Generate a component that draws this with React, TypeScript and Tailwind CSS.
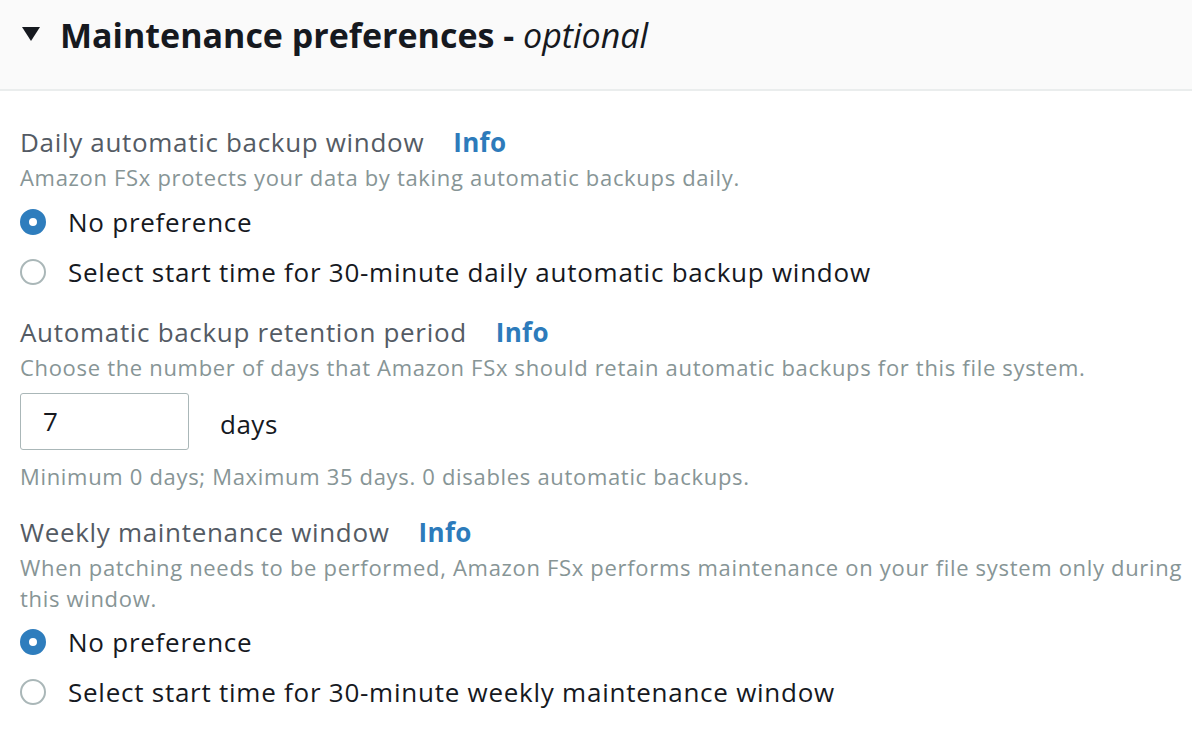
const font = { fontFamily: '"Open Sans", "Noto Sans", sans-serif' };

function Radio({ checked, label }: { checked?: boolean; label: string }) {
  return (
    <label className="flex h-[50px] items-center">
      {checked ? (
        <span className="h-[26px] w-[26px] rounded-full border-[9px] border-[#2e7dbd] bg-white" />
      ) : (
        <span className="h-[26px] w-[26px] rounded-full border-2 border-[#aab7b8] bg-white" />
      )}
      <span className="ml-[22px] whitespace-nowrap text-[26px] leading-[36px] tracking-[0.75px] text-[#16191f]">{label}</span>
    </label>
  );
}

function FieldLabel({ text, className = "" }: { text: string; className?: string }) {
  return (
    <div className={"flex h-[36px] items-center " + className}>
      <span className="text-[26px] leading-[36px] tracking-[0.68px] text-[#545b64]">{text}</span>
      <a className="ml-[29px] text-[26px] font-bold leading-[36px] tracking-[0.3px] text-[#2d7bbb]">Info</a>
    </div>
  );
}

function Description({ children, className = "" }: { children: React.ReactNode; className?: string }) {
  return (
    <p className={"text-[22px] leading-[31px] tracking-[0.68px] text-[#879596] " + className}>{children}</p>
  );
}

export default function App() {
  return (
    <div style={font} className="h-[742px] w-[1192px] overflow-hidden bg-white">
      <div className="flex h-[91px] items-start border-b-2 border-[#eaeded] bg-[#fafafa] pl-[22px] pt-[13px]">
        <svg width="18" height="15" viewBox="0 0 18 15" className="mt-[14px]">
          <polygon points="0,0 18,0 9,14" fill="#16191f" />
        </svg>
        <h2 className="ml-[20px] whitespace-nowrap text-[34px] font-bold leading-[44px] text-[#16191f]">
          Maintenance preferences - <i className="font-normal">optional</i>
        </h2>
      </div>

      <div className="flex w-[1240px] flex-col px-[20px] pt-[33px]">
        <FieldLabel text="Daily automatic backup window" />
        <Description className="mt-[2px]">Amazon FSx protects your data by taking automatic backups daily.</Description>
        <div className="mt-[4px] flex flex-col">
          <Radio checked label="No preference" />
          <Radio label="Select start time for 30-minute daily automatic backup window" />
        </div>

        <FieldLabel text="Automatic backup retention period" className="mt-[17px]" />
        <Description className="mt-[2px]">
          Choose the number of days that Amazon FSx should retain automatic backups for this file system.
        </Description>
        <div className="mt-[10px] flex items-center">
          <div className="flex h-[57px] w-[169px] items-center rounded-[3px] border border-[#aab7b8] pl-[22px] text-[26px] text-[#16191f]">
            7
          </div>
          <span className="ml-[31px] mt-[6px] text-[26px] tracking-[0.5px] text-[#16191f]">days</span>
        </div>
        <Description className="mt-[11px]">Minimum 0 days; Maximum 35 days. 0 disables automatic backups.</Description>

        <FieldLabel text="Weekly maintenance window" className="mt-[22px]" />
        <Description className="mt-[2px] w-[1188px]">
          When patching needs to be performed, Amazon FSx performs maintenance on your file system only during this window.
        </Description>
        <div className="mt-[3px] flex flex-col">
          <Radio checked label="No preference" />
          <Radio label="Select start time for 30-minute weekly maintenance window" />
        </div>
      </div>
    </div>
  );
}
